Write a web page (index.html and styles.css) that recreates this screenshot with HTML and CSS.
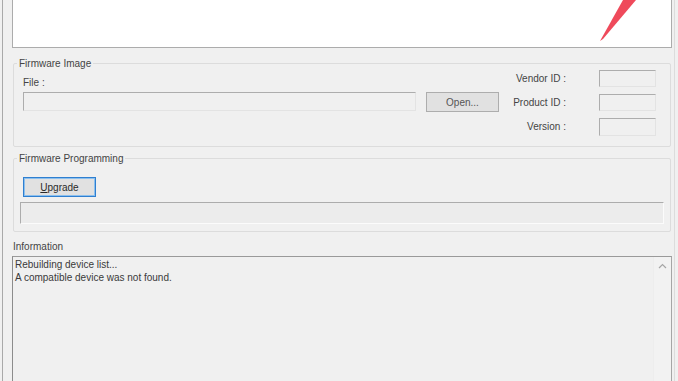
FILE: index.html
```html
<!DOCTYPE html>
<html lang="en">
<head>
    <meta charset="UTF-8">
    <title>Firmware Upgrade</title>
    <link rel="stylesheet" href="styles.css">
</head>
<body>
    <div class="window">
        <div class="banner">
            <svg class="arrow" viewBox="0 0 658 47" width="658" height="47">
                <polygon points="610,0 623,0 590,39 587,41" fill="#ef4a5b"/>
            </svg>
        </div>

        <fieldset class="group image-group">
            <legend>Firmware Image</legend>
            <div class="image-body">
                <div class="file-col">
                    <div class="label">File :</div>
                    <div class="field file-field"></div>
                </div>
                <button class="btn open-btn">Open...</button>
                <div class="ids">
                    <span>Vendor ID :</span><div class="field"></div>
                    <span>Product ID :</span><div class="field"></div>
                    <span>Version :</span><div class="field"></div>
                </div>
            </div>
        </fieldset>

        <fieldset class="group prog-group">
            <legend>Firmware Programming</legend>
            <button class="btn upgrade-btn"><u>U</u>pgrade</button>
            <div class="progress"></div>
        </fieldset>

        <div class="info-label">Information</div>
        <div class="info-box">
            <div class="log">Rebuilding device list...<br>A compatible device was not found.</div>
            <div class="scroll">
                <svg width="9" height="6" viewBox="0 0 9 6"><polyline points="1,5 4.5,1.5 8,5" fill="none" stroke="#a6a6a6" stroke-width="1.2"/></svg>
            </div>
        </div>
    </div>
</body>
</html>
```

FILE: styles.css
```css
html, body {
    margin: 0;
    height: 100%;
    overflow: hidden;
}

body {
    background-color: #f0f0f0;
    font-family: "Liberation Sans", Arial, sans-serif;
    font-size: 10px;
    line-height: 12px;
    color: #444;
}

.window {
    margin-left: 2px;
    width: 660px;
    height: 381px;
    padding: 0 2px 0 9px;
    border-left: 1px solid #a9a9a9;
    border-right: 1px solid #dcdcdc;
}

.banner {
    position: relative;
    height: 47px;
    background-color: #fff;
    border: 1px solid #acacac;
    border-top: none;
}

.arrow {
    position: absolute;
    top: 0;
    left: 0;
}

.group {
    min-width: 0;
    margin: 0 1px;
    border: 1px solid #dcdcdc;
    border-radius: 2px;
}

.group legend {
    margin-left: -3px;
    padding: 1px 2px 0;
    line-height: 12px;
}

.image-group {
    margin-top: 9px;
    padding: 0 6px 10px;
}

.image-body {
    display: flex;
    align-items: flex-start;
    padding-left: 3px;
}

.file-col {
    flex: 1;
    margin-top: 7px;
}

.field {
    box-sizing: border-box;
    height: 17px;
    border: 1px solid;
    border-color: #adadad #e3e3e3 #e3e3e3 #adadad;
    background-color: #f0f0f0;
}

.file-field {
    margin-top: 3px;
    height: 19px;
}

.btn {
    box-sizing: border-box;
    width: 73px;
    height: 20px;
    padding: 0;
    font-family: inherit;
    font-size: 10px;
    color: #3a3a3a;
    background-color: #e1e1e1;
    border: 1px solid #adadad;
}

.open-btn {
    margin: 22px 0 0 10px;
    color: #555;
}

.ids {
    display: grid;
    grid-template-columns: 60px 57px;
    column-gap: 33px;
    row-gap: 7px;
    margin: 0 8px 0 7px;
}

.ids span {
    text-align: right;
    align-self: center;
}

.ids .field:last-child {
    height: 18px;
}

.prog-group {
    margin-top: 5px;
    padding: 0 6px 7px;
}

.upgrade-btn {
    display: block;
    margin: 12px 0 0 3px;
    border-color: #2f7fd0;
    box-shadow: inset 0 0 0 1px #8cc0ee;
    color: #2a2a2a;
}

.progress {
    box-sizing: border-box;
    height: 22px;
    margin-top: 5px;
    border: 1px solid;
    border-color: #acacac #fbfbfb #fbfbfb #acacac;
    background-color: #ececec;
}

.info-label {
    margin-top: 9px;
    padding-left: 1px;
}

.info-box {
    display: flex;
    box-sizing: border-box;
    height: 140px;
    margin-top: 3px;
    border: 1px solid;
    border-color: #9a9a9a #a6a6a6 #a6a6a6 #8c8c8c;
    background-color: #f0f0f0;
}

.log {
    flex: 1;
    padding: 1px 2px;
    line-height: 13px;
    color: #3a3a3a;
}

.scroll {
    width: 17px;
    display: flex;
    justify-content: center;
    padding-top: 6px;
    background-color: #f2f2f2;
    border-left: 1px solid #ededed;
}
```
